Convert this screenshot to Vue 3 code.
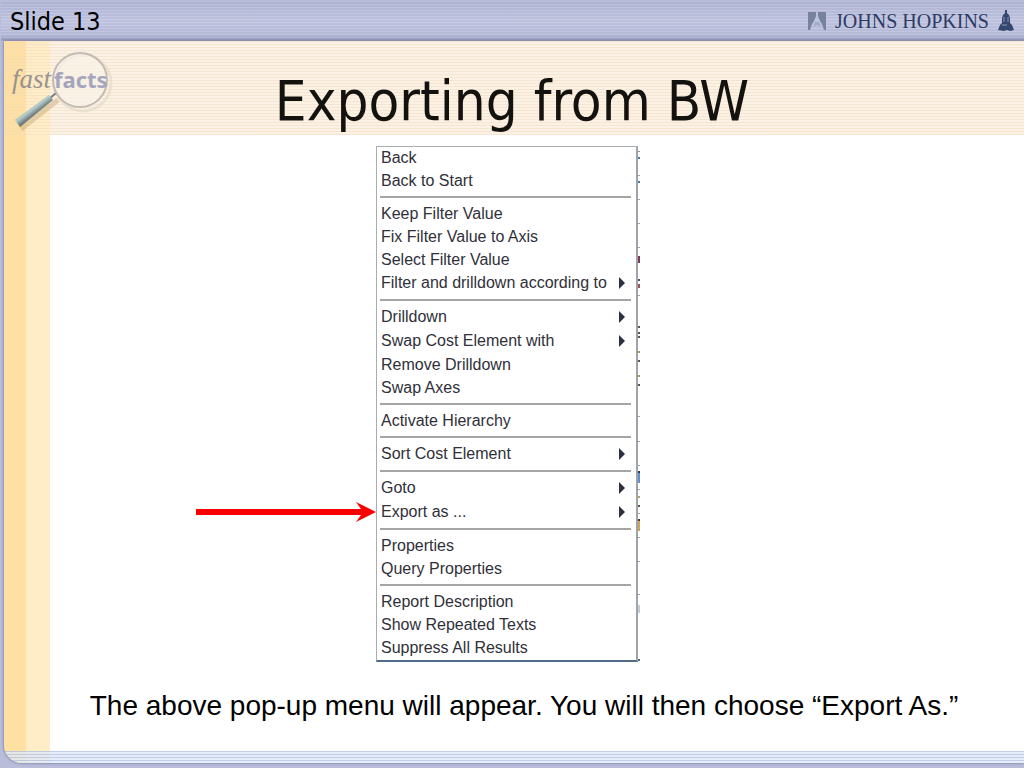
<script setup>
const groups = [
  [{ label: 'Back' }, { label: 'Back to Start' }],
  [
    { label: 'Keep Filter Value' },
    { label: 'Fix Filter Value to Axis' },
    { label: 'Select Filter Value' },
    { label: 'Filter and drilldown according to', sub: true },
  ],
  [
    { label: 'Drilldown', sub: true },
    { label: 'Swap Cost Element with', sub: true },
    { label: 'Remove Drilldown' },
    { label: 'Swap Axes' },
  ],
  [{ label: 'Activate Hierarchy' }],
  [{ label: 'Sort Cost Element', sub: true }],
  [{ label: 'Goto', sub: true }, { label: 'Export as ...', sub: true, pointed: true }],
  [{ label: 'Properties' }, { label: 'Query Properties' }],
  [{ label: 'Report Description' }, { label: 'Show Repeated Texts' }, { label: 'Suppress All Results' }],
]

// slivers of the report window visible along the right edge of the menu
const slivers = [
  { y: 4, h: 1, c: '#8a97a8' },
  { y: 10, h: 2, c: '#3f78b5' },
  { y: 28, h: 1, c: '#9aa3ad' },
  { y: 34, h: 2, c: '#3f78b5' },
  { y: 52, h: 1, c: '#9aa3ad' },
  { y: 76, h: 1, c: '#9aa3ad' },
  { y: 100, h: 1, c: '#9aa3ad' },
  { y: 109, h: 7, c: '#7b3a55' },
  { y: 132, h: 2, c: '#44546a' },
  { y: 137, h: 4, c: '#9a5560' },
  { y: 148, h: 1, c: '#9aa3ad' },
  { y: 179, h: 2, c: '#555555' },
  { y: 185, h: 2, c: '#555555' },
  { y: 189, h: 2, c: '#555555' },
  { y: 204, h: 2, c: '#a89a60' },
  { y: 213, h: 2, c: '#555555' },
  { y: 228, h: 2, c: '#a89a60' },
  { y: 237, h: 2, c: '#555555' },
  { y: 269, h: 1, c: '#9aa3ad' },
  { y: 294, h: 1, c: '#9aa3ad' },
  { y: 318, h: 1, c: '#9aa3ad' },
  { y: 324, h: 2, c: '#2b3d52' },
  { y: 326, h: 10, c: '#5b93c9' },
  { y: 342, h: 1, c: '#9aa3ad' },
  { y: 349, h: 2, c: '#b5a070' },
  { y: 358, h: 2, c: '#555555' },
  { y: 366, h: 1, c: '#9aa3ad' },
  { y: 372, h: 2, c: '#4d3d22' },
  { y: 374, h: 10, c: '#cda45c' },
  { y: 390, h: 1, c: '#9aa3ad' },
  { y: 414, h: 1, c: '#9aa3ad' },
  { y: 447, h: 1, c: '#9aa3ad' },
  { y: 458, h: 8, c: '#c3cedb' },
  { y: 512, h: 2, c: '#4f6b86' },
]
</script>

<template>
  <div class="slide">
    <header class="topbar">
      <span class="slide-no">Slide 13</span>
      <div class="brand">
        <svg class="brand-mark" width="18" height="20" viewBox="0 0 18 20" aria-hidden="true">
          <path d="M0 1H8V5L6 10L4 13L2 19H0Z" fill="#77829c" />
          <path d="M10 1H18V19H16L14 13L12 10L10 5Z" fill="#77829c" />
          <path d="M5 16L7 11H11L13 16L9 14Z" fill="#a4abc4" />
        </svg>
        <span class="brand-name">JOHNS HOPKINS</span>
        <svg class="brand-dome" width="16" height="22" viewBox="0 0 16 22" aria-hidden="true">
          <path d="M7 0H9V3L11 5L12 8V13L14 15L16 20L12 21L9 20L6 21L0 20L2 15L4 13V8L5 5L7 3Z" fill="#34486f" />
          <path d="M6 7V12M10 7V12M4 15H9" stroke="#8d9bbd" stroke-width="1" />
        </svg>
      </div>
    </header>

    <div class="page">
      <div class="banner">
        <svg class="logo" width="112" height="90" viewBox="0 0 112 90" role="img" aria-label="fast facts">
          <defs>
            <linearGradient id="handle" gradientUnits="userSpaceOnUse" x1="28" y1="61" x2="34" y2="69">
              <stop offset="0" stop-color="#6f979e" />
              <stop offset="0.4" stop-color="#b9d0d0" />
              <stop offset="1" stop-color="#6c7777" />
            </linearGradient>
          </defs>
          <circle cx="79" cy="40" r="28" fill="none" stroke="#e3d7c7" stroke-width="3" opacity="0.6" />
          <path d="M17 86L54 57" stroke="#c9ae80" stroke-width="5" opacity="0.5" />
          <path d="M45 56L52 50" stroke="#77807f" stroke-width="2" />
          <path d="M11 77L45 52L49 57L16 84Z" fill="url(#handle)" />
          <circle cx="76" cy="37" r="27" fill="#faf2e8" fill-opacity="0.7" stroke="#c3bbb2" stroke-width="2" />
          <text class="logo-fast" x="8" y="45">fast</text>
          <text class="logo-facts" x="50" y="45">facts</text>
        </svg>
        <h1>Exporting from BW</h1>
      </div>

      <main>
        <nav class="menu" aria-label="Context menu">
          <ul v-for="(group, g) in groups" :key="g">
            <li v-for="item in group" :key="item.label" :class="{ sub: item.sub }">
              <button type="button">
                <span>{{ item.label }}</span>
                <svg v-if="item.sub" width="6" height="12" viewBox="0 0 6 12" aria-hidden="true">
                  <path d="M0 0L6 6L0 12Z" fill="#2c3040" />
                </svg>
              </button>
              <svg v-if="item.pointed" class="arrow" width="180" height="20" viewBox="0 0 180 20" aria-hidden="true">
                <path d="M0 7H165L160 0L180 10L160 20L165 13H0Z" fill="#fb0000" />
              </svg>
            </li>
          </ul>
          <svg class="edge" width="2" height="514" viewBox="0 0 2 514" aria-hidden="true">
            <rect v-for="s in slivers" :key="s.y" x="0" :y="s.y" width="2" :height="s.h" :fill="s.c" />
          </svg>
        </nav>
        <p class="caption">The above pop-up menu will appear. You will then choose “Export As.”</p>
      </main>
      <div class="foot"></div>
    </div>
  </div>
</template>

<style>
body {
  margin: 0;
}
</style>

<style scoped>
.slide {
  min-height: 100vh;
  box-sizing: border-box;
  display: flex;
  flex-direction: column;
  padding: 1px 0 5px 1px;
  background: #b9bdda;
  font-family: "Liberation Sans", Arial, sans-serif;
  color: #000;
}

.topbar {
  height: 40px;
  display: flex;
  justify-content: space-between;
  align-items: center;
  padding: 0 10px 0 9px;
  background:
    repeating-linear-gradient(180deg, rgba(255, 255, 255, 0.16) 0 1px, transparent 1px 3px),
    linear-gradient(180deg, #adb2d2, #bec2df 50%, #b4b8d7 85%, #9094b6);
}

.slide-no {
  font-family: "DejaVu Sans Condensed", "DejaVu Sans", sans-serif;
  font-size: 25px;
}

.brand {
  display: flex;
  align-items: center;
  gap: 9px;
}

.brand-name {
  font-family: "Liberation Serif", "Times New Roman", serif;
  font-size: 20px;
  color: #2d3b63;
}

.page {
  flex: 1;
  display: flex;
  flex-direction: column;
  margin-left: 3px;
  border-bottom-left-radius: 18px;
  overflow: hidden;
  background: linear-gradient(90deg, #fee0a2 0 22px, #ffedc8 22px 46px, #fff 46px);
  box-shadow: 0 0 3px #62668c;
}

.banner {
  height: 94px;
  display: flex;
  align-items: center;
  background:
    repeating-linear-gradient(180deg, rgba(240, 218, 188, 0.5) 0 1px, transparent 1px 3px),
    linear-gradient(90deg, transparent 46px, #fbf2e5 46px);
}

.logo {
  flex: none;
}

.logo-fast {
  font: italic 27px "Liberation Serif", serif;
  fill: #99938f;
}

.logo-facts {
  font: bold 22px "Noto Sans", sans-serif;
  fill: #a5a5bd;
}

h1 {
  flex: 1;
  margin: 0 116px 0 0;
  padding-top: 26px;
  font-family: "DejaVu Sans Condensed", "DejaVu Sans", sans-serif;
  font-weight: 400;
  font-size: 56px;
  line-height: 68px;
  text-align: center;
  color: #14120f;
}

main {
  flex: 1;
  display: flex;
  flex-direction: column;
  align-items: center;
  padding: 11px 0 0;
}

.menu {
  position: relative;
  width: 256px;
  margin-right: 14px;
  padding-left: 3px;
  border: 1px solid #a9adb2;
  border-right: 2px solid #a0a4a8;
  border-bottom: 2px solid #4f6b86;
  background: #fff;
}

ul {
  list-style: none;
  margin: 0 5px 0 0;
  padding: 0;
}

ul + ul {
  margin-top: 3px;
  padding-top: 5px;
  border-top: 2px solid #a5a5a5;
}

li {
  position: relative;
  height: 23px;
}

li.sub {
  height: 24px;
}

button {
  width: 100%;
  height: 100%;
  display: flex;
  align-items: center;
  justify-content: space-between;
  padding: 0 6px 2px 1px;
  border: 0;
  background: none;
  font-family: inherit;
  font-size: 16px;
  line-height: 20px;
  color: #30303a;
  text-align: left;
  white-space: nowrap;
}

.arrow {
  position: absolute;
  top: 1px;
  right: 100%;
  margin-right: 4px;
}

.edge {
  position: absolute;
  top: 0;
  left: 100%;
  margin-left: 2px;
}

.caption {
  margin: 24px 0 0 20px;
  font-size: 28px;
  line-height: 40px;
}

.foot {
  height: 12px;
  background: repeating-linear-gradient(180deg, #b0c2e4 0 1px, #e0e8f8 1px 3px);
  opacity: 0.8;
}
</style>
